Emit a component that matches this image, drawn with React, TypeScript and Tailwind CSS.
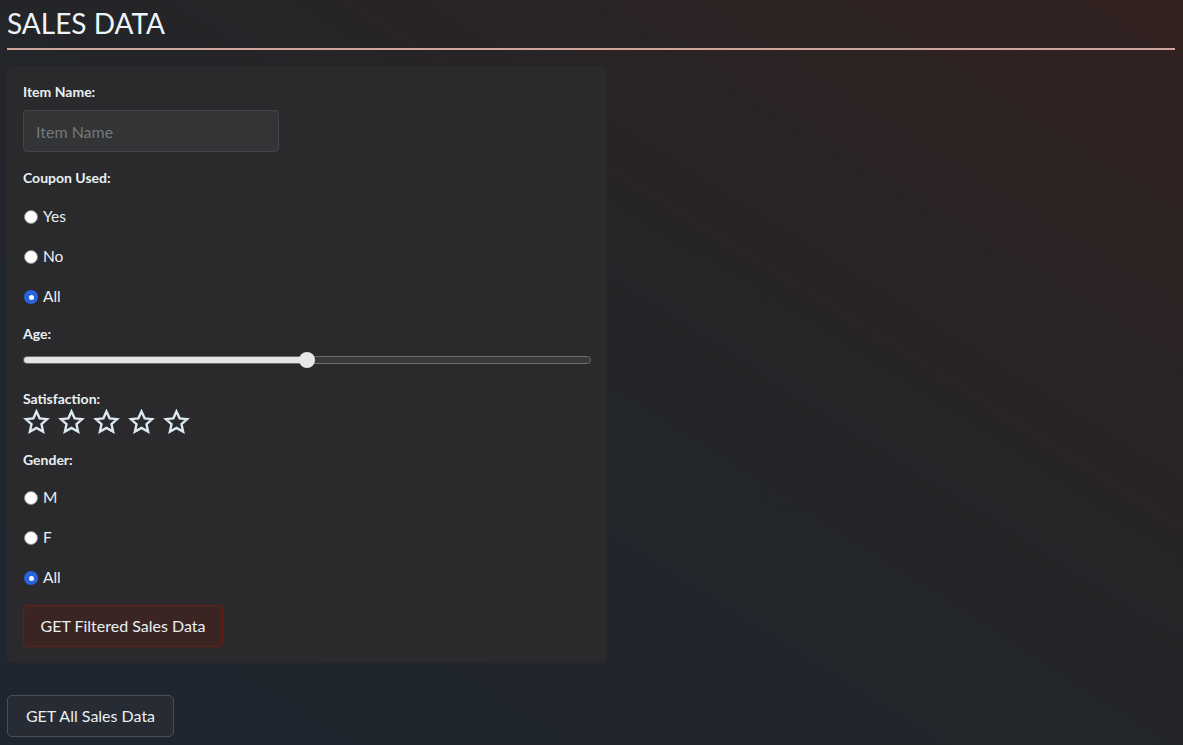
import { useState } from 'react';

const font = { fontFamily: '"Segoe UI", Lato, "Noto Sans", sans-serif' };

function Radio({ label, checked, onClick }: { label: string; checked: boolean; onClick: () => void }) {
  return (
    <label className="flex h-10 cursor-pointer items-center gap-[5px]" onClick={onClick}>
      {checked ? (
        <span className="ml-[1px] flex h-[14px] w-[14px] items-center justify-center rounded-full bg-[#2a63e0]">
          <span className="h-[5px] w-[5px] rounded-full bg-white" />
        </span>
      ) : (
        <span className="ml-[1px] h-[14px] w-[14px] rounded-full border border-[#8a8a8a] bg-white" />
      )}
      <span className="text-[15.5px] text-[#e9f0f4]">{label}</span>
    </label>
  );
}

function Star() {
  return (
    <svg width="27" height="26" viewBox="0 0 24 24" fill="none" stroke="#dce9f3" strokeWidth="2.2" strokeLinejoin="miter">
      <polygon points="12,2.2 14.9,8.6 21.8,9.3 16.6,14 18.1,20.9 12,17.4 5.9,20.9 7.4,14 2.2,9.3 9.1,8.6" />
    </svg>
  );
}

export default function App() {
  const [coupon, setCoupon] = useState('All');
  const [gender, setGender] = useState('All');
  const age = 50;

  return (
    <div
      className="min-h-[745px] bg-[linear-gradient(to_top_right,#1e2630_0%,#232529_50%,#31211f_100%)] pl-[7px] pr-[8px] text-[#e9f0f4]"
      style={font}
    >
      <h1 className="pt-[4px] text-[28px] font-normal leading-[38px] text-[#eef4f8]">SALES DATA</h1>
      <div className="mt-[6px] h-[2px] bg-[#d0a59b]" />

      <div className="mt-[16px] w-[600px] rounded-[6px] bg-[#2a2a2c] px-4 pb-4 pt-4">
        <div className="text-[14px] font-bold leading-5">Item Name:</div>
        <input
          placeholder="Item Name"
          className="mt-2 h-[42px] w-[256px] rounded-[4px] border border-[#444548] bg-[#333436] px-3 text-[16px] text-[#e9f0f4] outline-none placeholder:text-[#76787a]"
        />

        <div className="mt-4 text-[14px] font-bold leading-5">Coupon Used:</div>
        <div className="mt-[9px]">
          {['Yes', 'No', 'All'].map((o) => (
            <Radio key={o} label={o} checked={coupon === o} onClick={() => setCoupon(o)} />
          ))}
        </div>

        <div className="mt-[7px] text-[14px] font-bold leading-5">Age:</div>
        <div className="relative flex h-8 items-center">
          <div className="flex h-[8px] w-full overflow-hidden rounded-full border border-[#6e6e70]">
            <div className="h-full bg-[#e4e6e6]" style={{ width: `${age}%` }} />
            <div className="h-full flex-1 bg-[#3a3a3c]" />
          </div>
          <div
            className="absolute top-1/2 h-[16px] w-[16px] -translate-x-1/2 -translate-y-1/2 rounded-full bg-[#e6e8e8]"
            style={{ left: `${age}%` }}
          />
        </div>

        <div className="mt-[13px] text-[14px] font-bold leading-5">Satisfaction:</div>
        <div className="flex gap-[8px]">
          {[0, 1, 2, 3, 4].map((i) => (
            <Star key={i} />
          ))}
        </div>

        <div className="mt-[15px] text-[14px] font-bold leading-5">Gender:</div>
        <div className="mt-[8px]">
          {['M', 'F', 'All'].map((o) => (
            <Radio key={o} label={o} checked={gender === o} onClick={() => setGender(o)} />
          ))}
        </div>

        <button className="mt-[7px] h-[42px] w-[200px] rounded-[4px] border border-[#6a1c16] bg-[#3b2523] text-[16px] text-[#e9f0f4]">
          GET Filtered Sales Data
        </button>
      </div>

      <button className="mt-8 h-[42px] w-[167px] rounded-[5px] border border-[#4a4e55] bg-[#272b33] text-[16px] text-[#e9f0f4]">
        GET All Sales Data
      </button>
    </div>
  );
}
